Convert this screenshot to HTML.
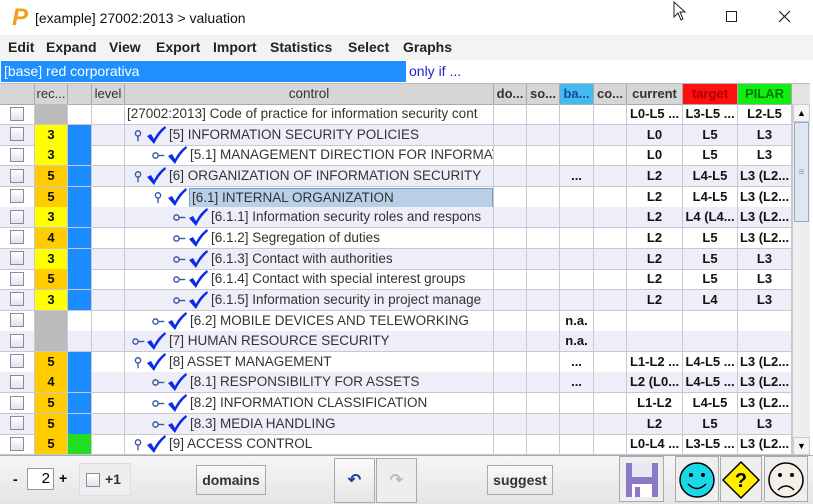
<!DOCTYPE html>
<html><head><style>
*{box-sizing:border-box;margin:0;padding:0}
body{width:813px;height:504px;overflow:hidden;background:#fff;font-family:"Liberation Sans",sans-serif;position:relative}
.title{position:absolute;left:0;top:0;width:813px;height:35px;background:#fff}
.menu{position:absolute;left:0;top:35px;width:813px;height:25px;background:#f3f3f3;font-size:14px;font-weight:bold;color:#222}
.menu span{position:absolute;top:4px}
.filter{position:absolute;left:0;top:60px;width:813px;height:23px;background:#fff}
.hdr{position:absolute;left:0;top:83px;height:21px;width:810px;background:#e4e4e4;border-top:1px solid #bbb}
.r{position:absolute;left:0;height:21px;width:792px;display:flex}
.c{height:100%;border-right:1px solid #c8c8d0;border-bottom:1px solid #c8c8d0;font-size:13px;font-weight:bold;text-align:center;line-height:20px;color:#111;overflow:hidden;white-space:nowrap;flex:none}
.w0{width:35px}.w1{width:33px}.w2{width:24px}.w3{width:33px}.w4{width:369px;text-align:left;font-weight:normal;font-size:13.5px;color:#333;position:relative}
.w5{width:33px}.w6{width:33px}.w7{width:34px}.w8{width:33px}.w9{width:56px}.w10{width:55px}.w11{width:54px}
.alt .c{background:#eeeef9}
.alt .c.y{background:#ffff00}.alt .c.o{background:#ffcc00}.alt .c.g{background:#bbbbbb}.alt .c.b{background:#1a8cff}
.c.y{background:#ffff00}.c.o{background:#ffcc00}.c.g{background:#bbbbbb}.c.b{background:#1a8cff}.c.gr{background:#22dd22}
.cb{display:inline-block;width:14px;height:14px;border:1px solid #8a8a9a;background:linear-gradient(#fff,#e0e4ec);vertical-align:middle;margin-top:-2px}
.h .c{background:#d6d6d6;color:#333;font-size:13px;font-weight:normal;border-color:#aaa}
.h .c.bold{font-weight:bold}
.ico{position:absolute;top:2px}
.txt{position:absolute;top:0}
.sel{background:#b8cfe8;border:1px solid #7a9cc8;padding:0 2px;line-height:18px;top:1px}
.btn{position:absolute;border:1px solid #aaa;background:linear-gradient(#fafafa,#e6e6e6);font-size:14px;font-weight:bold;color:#333;text-align:center}
</style></head><body>
<div class="title">
<span style="position:absolute;left:12px;top:4px;font-size:24px;font-weight:bold;font-style:italic;color:#f0a020">P</span>
<span style="position:absolute;left:35px;top:10px;font-size:14px;color:#111">[example] 27002:2013 &gt; valuation</span>
<svg style="position:absolute;left:672px;top:1px" width="16" height="22"><path d="M2 1 L2 16 L6 12 L9 19 L11 18 L8 11 L13 11 Z" fill="#fff" stroke="#222"/></svg>
<svg style="position:absolute;left:726px;top:11px" width="12" height="12"><rect x="0.5" y="0.5" width="10" height="10" fill="none" stroke="#222"/></svg>
<svg style="position:absolute;left:779px;top:11px" width="12" height="12"><path d="M0 0L11 11M11 0L0 11" stroke="#222" stroke-width="1.2"/></svg>
</div>
<div class="menu"><span style="left:8px">Edit</span><span style="left:46px">Expand</span><span style="left:109px">View</span><span style="left:156px">Export</span><span style="left:213px">Import</span><span style="left:270px">Statistics</span><span style="left:348px">Select</span><span style="left:403px">Graphs</span></div>
<div class="filter">
<div style="position:absolute;left:1px;top:1px;width:405px;height:21px;background:#1e90ff;color:#fff;font-size:14px;line-height:21px;padding-left:3px">[base] red corporativa</div>
<span style="position:absolute;left:409px;top:3px;font-size:14px;color:#2222cc">only if ...</span>
</div>
<div class="hdr"><div class="r h" style="top:0;height:21px">
<div class="c w0"></div><div class="c w1">rec...</div><div class="c w2"></div><div class="c w3">level</div><div class="c w4" style="text-align:center;font-size:13.5px">control</div>
<div class="c w5 bold">do...</div><div class="c w6 bold">so...</div><div class="c w7 bold" style="background:#44bbee;color:#1b4b9b">ba...</div><div class="c w8 bold">co...</div><div class="c w9 bold">current</div><div class="c w10 bold" style="background:#ff1010;color:#a00">target</div><div class="c w11 bold" style="background:#11ee11;color:#070">PILAR</div></div></div>

<svg width="0" height="0" style="position:absolute"><defs>
<symbol id="ck" viewBox="0 0 20 20"><path d="M1 11 L5 9 L8 14 Q12 6 19 1 L20 3 Q13 9 8 19 Z" fill="#0a2ce6"/></symbol>
<symbol id="pin" viewBox="0 0 10 16"><circle cx="5" cy="5" r="3" fill="none" stroke="#3a5aa0" stroke-width="1.6"/><path d="M5 8V14" stroke="#3a5aa0" stroke-width="1.6"/></symbol>
<symbol id="key" viewBox="0 0 16 10"><circle cx="4" cy="5" r="3" fill="none" stroke="#3a5aa0" stroke-width="1.6"/><path d="M7 5H14" stroke="#3a5aa0" stroke-width="1.6"/></symbol>
</defs></svg>

<div style="position:absolute;left:0;top:104px;width:792px;height:351px;overflow:hidden">
<div class="r" style="top:0"><div class="c w0"><span class="cb"></span></div><div class="c w1 g"></div><div class="c w2"></div><div class="c w3"></div><div class="c w4"><span class="txt" style="left:2px">[27002:2013] Code of practice for information security cont</span></div><div class="c w5"></div><div class="c w6"></div><div class="c w7"></div><div class="c w8"></div><div class="c w9">L0-L5 ...</div><div class="c w10">L3-L5 ...</div><div class="c w11">L2-L5</div></div>

<div class="r alt" style="top:20.65px"><div class="c w0"><span class="cb"></span></div><div class="c w1 y">3</div><div class="c w2 b"></div><div class="c w3"></div><div class="c w4"><svg class="ico" style="left:8px;top:4px" width="10" height="14"><use href="#pin"/></svg><svg class="ico" style="left:21px;top:0" width="20" height="20"><use href="#ck"/></svg><span class="txt" style="left:44px">[5] INFORMATION SECURITY POLICIES</span></div><div class="c w5"></div><div class="c w6"></div><div class="c w7"></div><div class="c w8"></div><div class="c w9">L0</div><div class="c w10">L5</div><div class="c w11">L3</div></div>

<div class="r" style="top:41.3px"><div class="c w0"><span class="cb"></span></div><div class="c w1 y">3</div><div class="c w2 b"></div><div class="c w3"></div><div class="c w4"><svg class="ico" style="left:27px;top:6px" width="14" height="9"><use href="#key"/></svg><svg class="ico" style="left:42px;top:0" width="20" height="20"><use href="#ck"/></svg><span class="txt" style="left:65px">[5.1] MANAGEMENT DIRECTION FOR INFORMATI</span></div><div class="c w5"></div><div class="c w6"></div><div class="c w7"></div><div class="c w8"></div><div class="c w9">L0</div><div class="c w10">L5</div><div class="c w11">L3</div></div>

<div class="r alt" style="top:61.95px"><div class="c w0"><span class="cb"></span></div><div class="c w1 o">5</div><div class="c w2 b"></div><div class="c w3"></div><div class="c w4"><svg class="ico" style="left:8px;top:4px" width="10" height="14"><use href="#pin"/></svg><svg class="ico" style="left:21px;top:0" width="20" height="20"><use href="#ck"/></svg><span class="txt" style="left:44px">[6] ORGANIZATION OF INFORMATION SECURITY</span></div><div class="c w5"></div><div class="c w6"></div><div class="c w7">...</div><div class="c w8"></div><div class="c w9">L2</div><div class="c w10">L4-L5</div><div class="c w11">L3 (L2...</div></div>

<div class="r" style="top:82.6px"><div class="c w0"><span class="cb"></span></div><div class="c w1 o">5</div><div class="c w2 b"></div><div class="c w3"></div><div class="c w4"><svg class="ico" style="left:28px;top:4px" width="10" height="14"><use href="#pin"/></svg><svg class="ico" style="left:42px;top:0" width="20" height="20"><use href="#ck"/></svg><span class="txt sel" style="left:64px;width:304px">[6.1] INTERNAL ORGANIZATION</span></div><div class="c w5"></div><div class="c w6"></div><div class="c w7"></div><div class="c w8"></div><div class="c w9">L2</div><div class="c w10">L4-L5</div><div class="c w11">L3 (L2...</div></div>

<div class="r alt" style="top:103.25px"><div class="c w0"><span class="cb"></span></div><div class="c w1 y">3</div><div class="c w2 b"></div><div class="c w3"></div><div class="c w4"><svg class="ico" style="left:48px;top:6px" width="14" height="9"><use href="#key"/></svg><svg class="ico" style="left:63px;top:0" width="20" height="20"><use href="#ck"/></svg><span class="txt" style="left:86px">[6.1.1] Information security roles and respons</span></div><div class="c w5"></div><div class="c w6"></div><div class="c w7"></div><div class="c w8"></div><div class="c w9">L2</div><div class="c w10">L4 (L4...</div><div class="c w11">L3 (L2...</div></div>

<div class="r" style="top:123.9px"><div class="c w0"><span class="cb"></span></div><div class="c w1 o">4</div><div class="c w2 b"></div><div class="c w3"></div><div class="c w4"><svg class="ico" style="left:48px;top:6px" width="14" height="9"><use href="#key"/></svg><svg class="ico" style="left:63px;top:0" width="20" height="20"><use href="#ck"/></svg><span class="txt" style="left:86px">[6.1.2] Segregation of duties</span></div><div class="c w5"></div><div class="c w6"></div><div class="c w7"></div><div class="c w8"></div><div class="c w9">L2</div><div class="c w10">L5</div><div class="c w11">L3 (L2...</div></div>

<div class="r alt" style="top:144.55px"><div class="c w0"><span class="cb"></span></div><div class="c w1 y">3</div><div class="c w2 b"></div><div class="c w3"></div><div class="c w4"><svg class="ico" style="left:48px;top:6px" width="14" height="9"><use href="#key"/></svg><svg class="ico" style="left:63px;top:0" width="20" height="20"><use href="#ck"/></svg><span class="txt" style="left:86px">[6.1.3] Contact with authorities</span></div><div class="c w5"></div><div class="c w6"></div><div class="c w7"></div><div class="c w8"></div><div class="c w9">L2</div><div class="c w10">L5</div><div class="c w11">L3</div></div>

<div class="r" style="top:165.2px"><div class="c w0"><span class="cb"></span></div><div class="c w1 o">5</div><div class="c w2 b"></div><div class="c w3"></div><div class="c w4"><svg class="ico" style="left:48px;top:6px" width="14" height="9"><use href="#key"/></svg><svg class="ico" style="left:63px;top:0" width="20" height="20"><use href="#ck"/></svg><span class="txt" style="left:86px">[6.1.4] Contact with special interest groups</span></div><div class="c w5"></div><div class="c w6"></div><div class="c w7"></div><div class="c w8"></div><div class="c w9">L2</div><div class="c w10">L5</div><div class="c w11">L3</div></div>

<div class="r alt" style="top:185.85px"><div class="c w0"><span class="cb"></span></div><div class="c w1 y">3</div><div class="c w2 b"></div><div class="c w3"></div><div class="c w4"><svg class="ico" style="left:48px;top:6px" width="14" height="9"><use href="#key"/></svg><svg class="ico" style="left:63px;top:0" width="20" height="20"><use href="#ck"/></svg><span class="txt" style="left:86px">[6.1.5] Information security in project manage</span></div><div class="c w5"></div><div class="c w6"></div><div class="c w7"></div><div class="c w8"></div><div class="c w9">L2</div><div class="c w10">L4</div><div class="c w11">L3</div></div>

<div class="r" style="top:206.5px"><div class="c w0"><span class="cb"></span></div><div class="c w1 g"></div><div class="c w2"></div><div class="c w3"></div><div class="c w4"><svg class="ico" style="left:27px;top:6px" width="14" height="9"><use href="#key"/></svg><svg class="ico" style="left:42px;top:0" width="20" height="20"><use href="#ck"/></svg><span class="txt" style="left:65px">[6.2] MOBILE DEVICES AND TELEWORKING</span></div><div class="c w5"></div><div class="c w6"></div><div class="c w7">n.a.</div><div class="c w8"></div><div class="c w9"></div><div class="c w10"></div><div class="c w11"></div></div>

<div class="r alt" style="top:227.15px"><div class="c w0"><span class="cb"></span></div><div class="c w1 g"></div><div class="c w2"></div><div class="c w3"></div><div class="c w4"><svg class="ico" style="left:7px;top:6px" width="14" height="9"><use href="#key"/></svg><svg class="ico" style="left:21px;top:0" width="20" height="20"><use href="#ck"/></svg><span class="txt" style="left:44px">[7] HUMAN RESOURCE SECURITY</span></div><div class="c w5"></div><div class="c w6"></div><div class="c w7">n.a.</div><div class="c w8"></div><div class="c w9"></div><div class="c w10"></div><div class="c w11"></div></div>

<div class="r" style="top:247.8px"><div class="c w0"><span class="cb"></span></div><div class="c w1 o">5</div><div class="c w2 b"></div><div class="c w3"></div><div class="c w4"><svg class="ico" style="left:8px;top:4px" width="10" height="14"><use href="#pin"/></svg><svg class="ico" style="left:21px;top:0" width="20" height="20"><use href="#ck"/></svg><span class="txt" style="left:44px">[8] ASSET MANAGEMENT</span></div><div class="c w5"></div><div class="c w6"></div><div class="c w7">...</div><div class="c w8"></div><div class="c w9">L1-L2 ...</div><div class="c w10">L4-L5 ...</div><div class="c w11">L3 (L2...</div></div>

<div class="r alt" style="top:268.45px"><div class="c w0"><span class="cb"></span></div><div class="c w1 o">4</div><div class="c w2 b"></div><div class="c w3"></div><div class="c w4"><svg class="ico" style="left:27px;top:6px" width="14" height="9"><use href="#key"/></svg><svg class="ico" style="left:42px;top:0" width="20" height="20"><use href="#ck"/></svg><span class="txt" style="left:65px">[8.1] RESPONSIBILITY FOR ASSETS</span></div><div class="c w5"></div><div class="c w6"></div><div class="c w7">...</div><div class="c w8"></div><div class="c w9">L2 (L0...</div><div class="c w10">L4-L5 ...</div><div class="c w11">L3 (L2...</div></div>

<div class="r" style="top:289.1px"><div class="c w0"><span class="cb"></span></div><div class="c w1 o">5</div><div class="c w2 b"></div><div class="c w3"></div><div class="c w4"><svg class="ico" style="left:27px;top:6px" width="14" height="9"><use href="#key"/></svg><svg class="ico" style="left:42px;top:0" width="20" height="20"><use href="#ck"/></svg><span class="txt" style="left:65px">[8.2] INFORMATION CLASSIFICATION</span></div><div class="c w5"></div><div class="c w6"></div><div class="c w7"></div><div class="c w8"></div><div class="c w9">L1-L2</div><div class="c w10">L4-L5</div><div class="c w11">L3 (L2...</div></div>

<div class="r alt" style="top:309.75px"><div class="c w0"><span class="cb"></span></div><div class="c w1 o">5</div><div class="c w2 b"></div><div class="c w3"></div><div class="c w4"><svg class="ico" style="left:27px;top:6px" width="14" height="9"><use href="#key"/></svg><svg class="ico" style="left:42px;top:0" width="20" height="20"><use href="#ck"/></svg><span class="txt" style="left:65px">[8.3] MEDIA HANDLING</span></div><div class="c w5"></div><div class="c w6"></div><div class="c w7"></div><div class="c w8"></div><div class="c w9">L2</div><div class="c w10">L5</div><div class="c w11">L3</div></div>

<div class="r" style="top:330.4px"><div class="c w0"><span class="cb"></span></div><div class="c w1 o">5</div><div class="c w2 gr"></div><div class="c w3"></div><div class="c w4"><svg class="ico" style="left:8px;top:4px" width="10" height="14"><use href="#pin"/></svg><svg class="ico" style="left:21px;top:0" width="20" height="20"><use href="#ck"/></svg><span class="txt" style="left:44px">[9] ACCESS CONTROL</span></div><div class="c w5"></div><div class="c w6"></div><div class="c w7"></div><div class="c w8"></div><div class="c w9">L0-L4 ...</div><div class="c w10">L3-L5 ...</div><div class="c w11">L3 (L2...</div></div>
</div>

<!-- scrollbar -->
<div style="position:absolute;left:792px;top:104px;width:18px;height:351px;background:#eee;border-left:1px solid #ccc">
<div style="position:absolute;left:0;top:0;width:17px;height:18px;background:#f4f4f4;border:1px solid #ccc;font-size:9px;text-align:center;line-height:16px">▲</div>
<div style="position:absolute;left:1px;top:18px;width:15px;height:100px;background:#dde6f2;border:1px solid #9ab;text-align:center;font-size:10px;line-height:100px;color:#89a">≡</div>
<div style="position:absolute;left:0;bottom:0;width:17px;height:18px;background:#f4f4f4;border:1px solid #ccc;font-size:9px;text-align:center;line-height:16px">▼</div>
</div>

<!-- bottom toolbar -->
<div style="position:absolute;left:0;top:455px;width:813px;height:49px;background:linear-gradient(#f6f6f6,#e4e4e4);border-top:1px solid #aaa">
<span style="position:absolute;left:13px;top:15px;font-size:14px;font-weight:bold">-</span>
<div style="position:absolute;left:27px;top:12px;width:27px;height:22px;background:#fff;border:1px solid #999;font-size:15px;text-align:right;padding-right:3px;line-height:20px">2</div>
<span style="position:absolute;left:59px;top:14px;font-size:14px;font-weight:bold">+</span>
<div class="btn" style="left:79px;top:7px;width:52px;height:33px;background:#eee;border-color:#ddd"></div>
<span class="cb" style="position:absolute;left:86px;top:17px;margin:0"></span>
<span style="position:absolute;left:105px;top:15px;font-size:14px;font-weight:bold;color:#333">+1</span>
<div class="btn" style="left:196px;top:9px;width:70px;height:30px;line-height:28px">domains</div>
<div class="btn" style="left:334px;top:2px;width:41px;height:45px;line-height:43px;color:#1a3fa0;font-size:16px">↶</div>
<div class="btn" style="left:376px;top:2px;width:41px;height:45px;line-height:43px;color:#bbb;font-size:16px;background:#eee">↷</div>
<div class="btn" style="left:487px;top:9px;width:66px;height:30px;line-height:28px">suggest</div>
<div class="btn" style="left:619px;top:0;width:45px;height:46px;background:#eee"><svg width="40" height="40" style="margin-top:3px" viewBox="0 0 40 40"><rect x="4" y="3" width="32" height="34" fill="#8c78c8"/><rect x="10" y="3" width="20" height="14" fill="#e8e8f4"/><rect x="10" y="24" width="20" height="13" fill="#fff"/><rect x="13" y="27" width="5" height="10" fill="#8c78c8"/></svg></div>
<div class="btn" style="left:675px;top:0;width:44px;height:46px;background:#eee"><svg width="40" height="40" style="margin-top:3px" viewBox="0 0 40 40"><circle cx="20" cy="20" r="17" fill="#1ad8e8" stroke="#000" stroke-width="1.5"/><circle cx="14" cy="15" r="2"/><circle cx="26" cy="15" r="2"/><path d="M11 24 Q20 33 29 24" fill="none" stroke="#000" stroke-width="1.5"/></svg></div>
<div class="btn" style="left:720px;top:0;width:42px;height:46px;background:#eee"><svg width="40" height="40" style="margin-top:3px" viewBox="0 0 40 40"><path d="M20 2 L38 20 L20 38 L2 20 Z" fill="#ffee00" stroke="#000" stroke-width="1.5"/><text x="20" y="27" text-anchor="middle" font-family="Liberation Sans" font-weight="bold" font-size="20">?</text></svg></div>
<div class="btn" style="left:764px;top:0;width:44px;height:46px;background:#eee"><svg width="40" height="40" style="margin-top:3px" viewBox="0 0 40 40"><circle cx="20" cy="20" r="17" fill="#f4f0e8" stroke="#000" stroke-width="1.5"/><circle cx="14" cy="15" r="2"/><circle cx="26" cy="15" r="2"/><path d="M12 30 Q20 22 28 30" fill="none" stroke="#000" stroke-width="1.5"/></svg></div>
</div>
</body></html>
